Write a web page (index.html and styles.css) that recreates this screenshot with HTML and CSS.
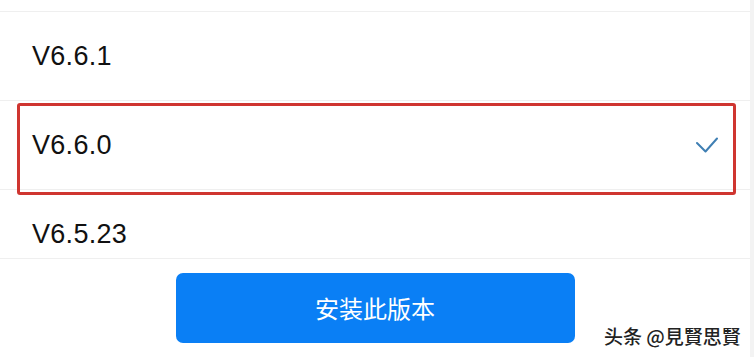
FILE: index.html
```html
<!DOCTYPE html>
<html lang="zh">
<head>
<meta charset="utf-8">
<title>版本选择</title>
<link rel="stylesheet" href="styles.css">
</head>
<body>
<div class="screen">
  <ul class="list">
    <li class="item"><span class="ver">V6.6.1</span></li>
    <li class="item"><span class="ver">V6.6.0</span>
      <svg class="check" width="22" height="16" viewBox="0 0 22 16"><polyline points="1,6 9.5,14.5 21,1.5" fill="none" stroke="#3f7fb3" stroke-width="2" stroke-linecap="round" stroke-linejoin="round"/></svg>
    </li>
    <li class="item"><span class="ver">V6.5.23</span></li>
  </ul>
  <div class="footer">
    <button class="install">安装此版本</button>
  </div>
  <div class="highlight"></div>
  <div class="watermark">头条 @見賢思賢</div>
</div>
</body>
</html>
```
FILE: styles.css
```css
html, body {
  margin: 0;
  padding: 0;
  background: #f3f3f3;
}
.screen {
  position: relative;
  width: 750px;
  height: 357px;
  background: #fff;
  display: flex;
  flex-direction: column;
  overflow: hidden;
  font-family: "Liberation Sans", Arial, "Noto Sans CJK SC", sans-serif;
}
.list {
  list-style: none;
  margin: 11px 0 0 0;
  padding: 0;
  border-top: 1px solid #efefef;
  height: 246px;
  overflow: hidden;
  flex: none;
}
.item {
  height: 88px;
  border-bottom: 1px solid #efefef;
  display: flex;
  align-items: center;
  justify-content: space-between;
  padding: 0 32px;
}
.ver {
  font-size: 27px;
  letter-spacing: 0.3px;
  color: #111;
}
.check {
  display: block;
}
.footer {
  flex: 1;
  border-top: 1px solid #efefef;
  display: flex;
  justify-content: center;
  align-items: flex-start;
  padding-top: 14px;
}
.install {
  width: 399px;
  height: 70px;
  border: none;
  border-radius: 7px;
  background: #0a7ff5;
  color: #fff;
  font-family: "Noto Sans CJK SC", sans-serif;
  font-size: 24px;
  line-height: 66px;
  padding: 0;
}
.highlight {
  position: absolute;
  left: 17px;
  top: 103px;
  width: 713px;
  height: 86px;
  border: 3px solid #cf3530;
  border-radius: 3px;
}
.watermark {
  position: absolute;
  left: 604px;
  top: 324px;
  font-family: "Noto Sans CJK SC", sans-serif;
  font-size: 19px;
  font-weight: 500;
  line-height: 24px;
  color: #222;
  text-shadow: 1px 1px 0 #fff, -1px -1px 0 #fff, 1px -1px 0 #fff, -1px 1px 0 #fff;
  white-space: nowrap;
}
```
